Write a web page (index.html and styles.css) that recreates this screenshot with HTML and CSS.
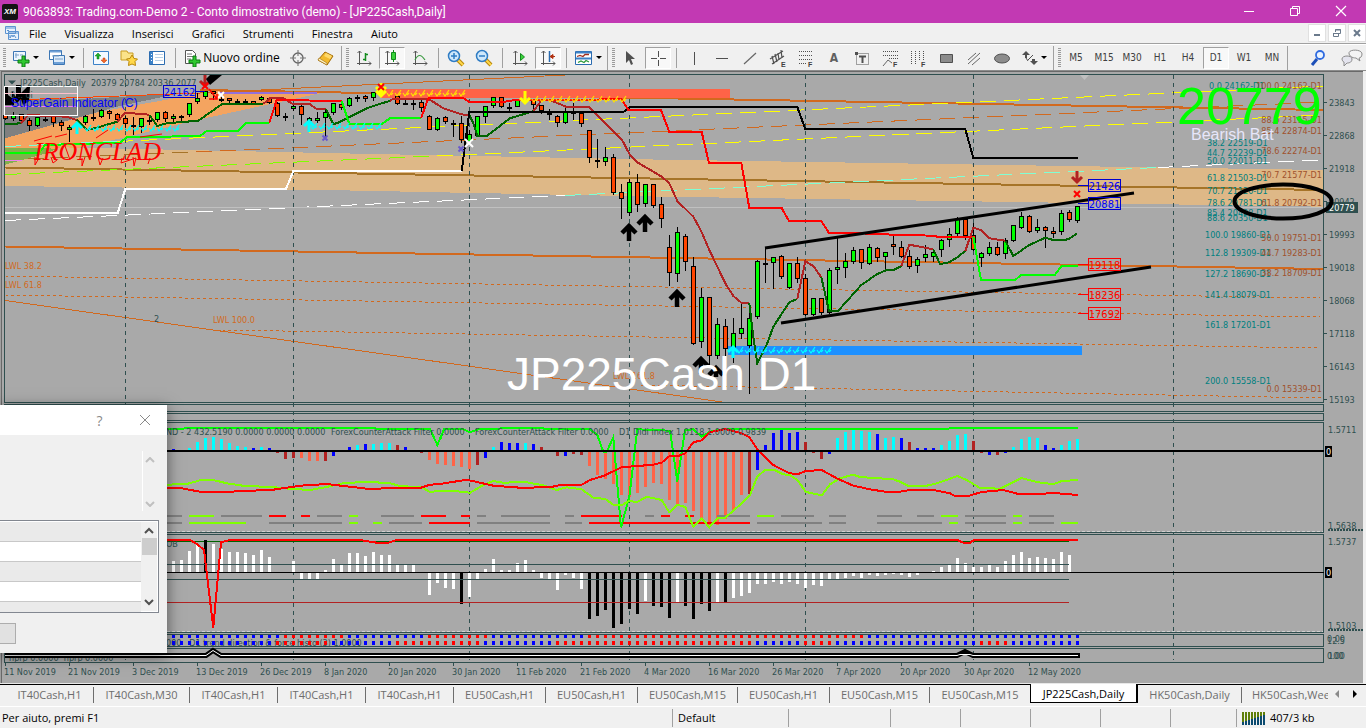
FILE: index.html
```
<!DOCTYPE html>
<html lang="it">
<head>
<meta charset="utf-8">
<title>9063893: Trading.com-Demo 2</title>
<link rel="stylesheet" href="styles.css">
</head>
<body>
<header class="titlebar">
  <span class="logo">XM</span>
  <h1 class="title">9063893: Trading.com-Demo 2 - Conto dimostrativo (demo) - [JP225Cash,Daily]</h1>
  <div class="winbtns">
    <button aria-label="Riduci a icona"><svg width="12" height="12"><path d="M1 6.500h10" stroke="#fff"/></svg></button>
    <button aria-label="Ripristina"><svg width="12" height="12"><path d="M1.500 3.500h7v7h-7zM3.500 3.500v-2h7v7h-2" fill="none" stroke="#fff"/></svg></button>
    <button aria-label="Chiudi"><svg width="12" height="12"><path d="M1 1l10 10M11 1L1 11" stroke="#fff" stroke-width="1.200"/></svg></button>
  </div>
</header>
<nav class="menubar">
  <svg class="docicon" width="16" height="16"><path d="M1.500 1.500h10v7h-10zM4.500 6.500h10v8h-10z" fill="#e8f2fc" stroke="#5b93d0"/><path d="M2 3h9M5 8h9M3 6l1-1 1 1M6 10v3l2-3 1 2 1-2 2 3" fill="none" stroke="#5b93d0"/></svg>
  <button>File</button><button>Visualizza</button><button>Inserisci</button><button>Grafici</button><button>Strumenti</button><button>Finestra</button><button>Aiuto</button>
  <div class="mdibtns">
    <button aria-label="Riduci"><svg width="10" height="10"><path d="M2 7h6" stroke="#6b7a8c" stroke-width="2"/></svg></button>
    <button aria-label="Ripristina finestra"><svg width="10" height="10"><path d="M1.500 5.500h5v3h-5zM3.500 4v-2.500h5v4h-2M3 2h6M1 5.500h6" fill="none" stroke="#6b7a8c"/></svg></button>
    <button aria-label="Chiudi finestra"><svg width="10" height="10"><path d="M2 2l6 6M8 2L2 8" stroke="#6b7a8c" stroke-width="2"/></svg></button>
  </div>
</nav>
<div class="toolbar" role="toolbar">
  <i class="grip"></i>
  <button class="tb drop" aria-label="Nuovo grafico"><svg width="18" height="18"><path d="M1.500 2.500h12v9h-12z" fill="#eef6ff" stroke="#3c76b4"/><path d="M4 4v5M3 6h4M8 6h3" stroke="#7aa0c8"/><path d="M10 7h3v4h4v3h-4v4h-3v-4H6v-3h4z" fill="#2fc82f" stroke="#0a7d12"/></svg><b class="caret"></b></button>
  <button class="tb drop" aria-label="Profili"><svg width="18" height="18"><path d="M1.500 1.500h12v9h-12z" fill="#fff" stroke="#3c76b4"/><path d="M5.500 6.500h11v9h-11z" fill="#dcebfa" stroke="#3c76b4"/><path d="M2 2.500h11M6 14h10" stroke="#6ea0d6" stroke-width="2"/><path d="M4 7h7M7 10h8" stroke="#7aa0c8"/></svg><b class="caret"></b></button>
  <i class="sep"></i>
  <button class="tb" aria-label="Market Watch"><svg width="16" height="16"><path d="M.5 1.500h15v13H.5z" fill="#f4f9ff" stroke="#3c82c8"/><path d="M5 3l3 3H6v3H4V6H2z" fill="#1fae2d" stroke="#0a7d12" stroke-width=".5"/><path d="M11 13l-3-3h2V8h2v2h2z" fill="#f36a2c" stroke="#c03c08" stroke-width=".5"/></svg></button>
  <button class="tb" aria-label="Navigatore"><svg width="18" height="18"><path d="M1 2h6l1 2h5v7H1z" fill="#fbe38a" stroke="#c99d22"/><path d="M12 6l2 3.500 3.500.5-2.500 2.500.5 4L12 15l-3.500 1.500.5-4L6.500 10l3.500-.5z" fill="#ffd84a" stroke="#b8860b"/></svg></button>
  <button class="tb" aria-label="Terminale"><svg width="16" height="16"><path d="M.5 1.500h15v13H.5z" fill="#fff" stroke="#2c6cb0"/><path d="M1 2h3v12H1z" fill="#3c82c8"/><path d="M6 4.500h8M6 7.500h8M6 10.500h8" stroke="#b8d0e8"/><path d="M2.500 4v9" stroke="#fff" stroke-dasharray="1 2"/></svg></button>
  <i class="sep"></i>
  <button class="tb order"><svg width="18" height="18"><path d="M2.500 1.500h7l3 3v10h-10z" fill="#fff" stroke="#555"/><path d="M4 5h5M4 7.500h6M4 10h4" stroke="#777"/><path d="M10 7h3v4h4v3h-4v4h-3v-4H6v-3h4z" fill="#2fc82f" stroke="#0a7d12"/></svg>Nuovo ordine</button>
  <button class="tb" aria-label="Strategy tester"><svg width="16" height="16"><circle cx="8" cy="8" r="5" fill="none" stroke="#666" stroke-width="1.300"/><path d="M8 0v6M8 10v6M0 8h6M10 8h6" stroke="#777" stroke-width="1.100"/></svg></button>
  <button class="tb" aria-label="MetaEditor"><svg width="18" height="18"><path d="M1 11l7-8 8 4-6 9z" fill="#f2b92e" stroke="#a06a08"/><path d="M1 11l9 5 0-2-8-5z" fill="#fff3c4" stroke="#a06a08" stroke-width=".6"/><path d="M9 4l6 3-2 3-6-3z" fill="#ffd96a"/></svg></button>
  <i class="sep full"></i><i class="grip"></i>
  <button class="tb" aria-label="Barre"><svg width="16" height="16"><path d="M3.500 1v14M1 13.500h14M1.500 3l2-2 2 2M13 11.500l2 2-2 2" fill="none" stroke="#555"/><path d="M9.500 3v8M9 4.500h3M7 9.500h3" stroke="#128a1c" stroke-width="1.500"/></svg></button>
  <button class="tb on" aria-label="Candele"><svg width="16" height="16"><path d="M3.500 1v14M1 13.500h14M1.500 3l2-2 2 2M13 11.500l2 2-2 2" fill="none" stroke="#555"/><path d="M9.500 0v12" stroke="#128a1c"/><path d="M7.500 2.500h4v7h-4z" fill="#3ad43a" stroke="#128a1c"/></svg></button>
  <button class="tb" aria-label="Linea"><svg width="16" height="16"><path d="M3.500 1v14M1 13.500h14M1.500 3l2-2 2 2M13 11.500l2 2-2 2" fill="none" stroke="#555"/><path d="M3 10c3-6 6-6 10 0" fill="none" stroke="#3a9a40" stroke-width="1.200"/></svg></button>
  <i class="sep"></i>
  <button class="tb" aria-label="Ingrandisci"><svg width="18" height="18"><path d="M10 10l6 6" stroke="#b8860b" stroke-width="4"/><path d="M11 11l5 5" stroke="#ffd84a" stroke-width="2"/><circle cx="7" cy="7" r="5.500" fill="#cfe8fb" stroke="#2f7cc4" stroke-width="1.500"/><path d="M4 7h6M7 4v6" stroke="#2f7cc4" stroke-width="1.500"/></svg></button>
  <button class="tb" aria-label="Riduci"><svg width="18" height="18"><path d="M10 10l6 6" stroke="#b8860b" stroke-width="4"/><path d="M11 11l5 5" stroke="#ffd84a" stroke-width="2"/><circle cx="7" cy="7" r="5.500" fill="#cfe8fb" stroke="#2f7cc4" stroke-width="1.500"/><path d="M4 7h6" stroke="#2f7cc4" stroke-width="1.500"/></svg></button>
  <i class="sep"></i>
  <button class="tb" aria-label="Scorrimento automatico"><svg width="16" height="16"><path d="M3.500 1v14M1 13.500h14M1.500 3l2-2 2 2M13 11.500l2 2-2 2" fill="none" stroke="#555"/><path d="M8.500 3.500l4 3.500-4 3.500z" fill="#3ad43a" stroke="#128a1c"/></svg></button>
  <button class="tb on" aria-label="Spostamento grafico"><svg width="16" height="16"><path d="M3.500 1v14M1 13.500h14M1.500 3l2-2 2 2M13 11.500l2 2-2 2" fill="none" stroke="#555"/><path d="M9.500 1v11" stroke="#2c6cb0" stroke-width="1.500"/><path d="M15 6.500h-4M13 4.500l-3 2 3 2z" fill="#b03010" stroke="#b03010"/></svg></button>
  <i class="sep"></i>
  <button class="tb drop" aria-label="Modelli"><svg width="18" height="18"><path d="M.5 2.500h16v13H.5z" fill="#fff" stroke="#2c6cb0"/><path d="M1 3.500h15M1 9.500h15" stroke="#3c82c8" stroke-width="2"/><path d="M2 7.500l3-1 3 1 2-2h4" fill="none" stroke="#a03020" stroke-width="1.300"/><path d="M3 13.500l3-1.500 3 1.500 2-2 3 1.500" fill="none" stroke="#2c9a3a" stroke-width="1.300"/></svg><b class="caret"></b></button>
  <i class="sep full"></i><i class="grip"></i>
  <button class="tb" aria-label="Cursore"><svg width="16" height="16"><path d="M4 1v12l3-3 2 5 2-1-2-5h4z" fill="#505050"/></svg></button>
  <button class="tb on" aria-label="Mirino"><svg width="16" height="16"><path d="M8.500 1v6M8.500 10v6M1 8.500h6M10 8.500h6" stroke="#505050"/></svg></button>
  <i class="sep"></i>
  <button class="tb" aria-label="Linea verticale"><svg width="16" height="16"><path d="M8.500 2v13" stroke="#505050"/></svg></button>
  <button class="tb" aria-label="Linea orizzontale"><svg width="16" height="16"><path d="M2 8.500h12" stroke="#505050"/></svg></button>
  <button class="tb" aria-label="Trendline"><svg width="16" height="16"><path d="M2 14L14 3" stroke="#666" stroke-width="1.200"/></svg></button>
  <button class="tb" aria-label="Canale"><svg width="18" height="18"><path d="M1 10L14 2M3 15L15 7M3 7l2 8M6 5l2 8M9 4l1 7M12 1l1 8" stroke="#505050" stroke-width="1.200"/><text class="tiny" x="12" y="18">E</text></svg></button>
  <button class="tb" aria-label="Fibonacci"><svg width="18" height="18"><path d="M2 2.500h13M2 6.500h13M2 10.500h13M2 14.500h8" stroke="#505050" stroke-dasharray="1 1"/><text class="tiny" x="11" y="18">F</text></svg></button>
  <button class="tb tf strong">A</button>
  <button class="tb" aria-label="Etichetta"><svg width="16" height="16"><path d="M2.500 3.500h12v11h-12z" fill="none" stroke="#505050" stroke-dasharray="1 1"/><path d="M5 6.500h7M8.500 6v7" stroke="#505050" stroke-width="2"/><path d="M1 2h3v3H1z" fill="#505050"/></svg></button>
  <button class="tb" aria-label="Espansione"><svg width="18" height="18"><path d="M2 2.500h15M2 6.500h15M8 9.500h9" stroke="#505050" stroke-dasharray="1 1"/><path d="M2 17l5-6 4 3" fill="none" stroke="#666"/><text class="tiny" x="12" y="18">F</text></svg></button>
  <button class="tb" aria-label="Fusi orari"><svg width="18" height="18"><path d="M2.500 2v13M6.500 2v13M10.500 2v9M14.500 2v9" stroke="#505050" stroke-dasharray="1 1"/><text class="tiny" x="12" y="18">F</text></svg></button>
  <button class="tb" aria-label="Rettangolo"><svg width="16" height="16"><path d="M2.500 4.500h12v8h-12z" fill="#8c8c8c" stroke="#505050"/></svg></button>
  <button class="tb" aria-label="Linee parallele"><svg width="16" height="16"><path d="M2 10l8-7M2 14L14 3M6 15l8-7" stroke="#666"/></svg></button>
  <button class="tb" aria-label="Ellisse"><svg width="18" height="16"><ellipse cx="9" cy="8.500" rx="7.500" ry="4.500" fill="#8c8c8c" stroke="#505050"/></svg></button>
  <button class="tb drop" aria-label="Frecce"><svg width="16" height="16"><path d="M4 1l4 4H5v3H3V5H0zM12 15l4-4h-3V9h-3v2H8z" fill="#505050"/><path d="M6 10l5-5M4 8l2 3" stroke="#505050"/></svg><b class="caret"></b></button>
  <i class="sep full"></i><i class="grip"></i>
  <button class="tb tf">M5</button><button class="tb tf">M15</button><button class="tb tf">M30</button><button class="tb tf">H1</button><button class="tb tf">H4</button><button class="tb tf on">D1</button><button class="tb tf">W1</button><button class="tb tf">MN</button>
  <i class="sep full"></i>
  <div class="right">
    <button class="tb" aria-label="Cerca"><svg width="18" height="18"><path d="M8 10l-5 6" stroke="#1d4fb8" stroke-width="3"/><circle cx="11" cy="6" r="4" fill="#eaf3ff" stroke="#2f6be0" stroke-width="1.800"/></svg></button>
    <button class="tb" aria-label="Chat"><svg width="22" height="18"><path d="M8 4c0-4 13-4 13 1 0 3-2 4-3 4l1 3-4-3c-4 0-7-2-7-5z" fill="#f4f4f4" stroke="#8c8c8c"/><path d="M1 10c0-4 10-4 10 0s-4 4-5 4l-3 3v-4c-1 0-2-2-2-3z" fill="#e4e4ee" stroke="#8c8c8c"/></svg></button>
  </div>
</div>
<main class="workspace">
  <svg id="chart" class="chart" viewBox="0 71 1366 613" preserveAspectRatio="xMinYMin meet" role="img" aria-label="JP225Cash D1"></svg>
  <section class="dialog" aria-label="Finestra di dialogo">
    <div class="dlg-title"><button aria-label="Guida">?</button><button aria-label="Chiudi"><svg width="12" height="12"><path d="M1 1l10 10M11 1L1 11" stroke="#8a8a8a"/></svg></button></div>
    <div class="dlg-body">
      <div class="memo">
        <svg width="10" height="6"><path d="M1 5l4-4 4 4" fill="none" stroke="#c0c0c0" stroke-width="2"/></svg>
        <svg width="10" height="6"><path d="M1 1l4 4 4-4" fill="none" stroke="#c0c0c0" stroke-width="2"/></svg>
      </div>
      <div class="list">
        <div class="rows"><i></i><i></i><i></i><i></i><i></i></div>
        <div class="scroll">
          <svg width="10" height="16"><path d="M1 11l4-4 4 4" fill="none" stroke="#505050" stroke-width="2"/></svg>
          <b class="thumb"></b>
          <svg class="down" width="10" height="16"><path d="M1 5l4 4 4-4" fill="none" stroke="#505050" stroke-width="2"/></svg>
        </div>
      </div>
      <button class="dlg-btn" aria-label="OK"></button>
    </div>
  </section>
</main>
<nav class="tabs">
  <a href="#" class="w88">IT40Cash,H1</a><a href="#" class="w96">IT40Cash,M30</a><a href="#" class="w88">IT40Cash,H1</a><a href="#" class="w88">IT40Cash,H1</a><a href="#" class="w88">IT40Cash,H1</a><a href="#" class="w92">EU50Cash,H1</a><a href="#" class="w92">EU50Cash,H1</a><a href="#" class="w100">EU50Cash,M15</a><a href="#" class="w92">EU50Cash,H1</a><a href="#" class="w100">EU50Cash,M15</a><a href="#" class="w100 last">EU50Cash,M15</a><a href="#" class="w108 active">JP225Cash,Daily</a><a href="#" class="w104">HK50Cash,Daily</a><a href="#" class="fill">HK50Cash,Weekly</a>
  <div class="tabnav"><button aria-label="Precedente"><svg width="6" height="8"><path d="M5 0v8L1 4z" fill="#8a8a8a"/></svg></button><button aria-label="Successivo"><svg width="6" height="8"><path d="M1 0v8l4-4z" fill="#000"/></svg></button></div>
</nav>
<footer class="status">
  <span class="help">Per aiuto, premi F1</span><span class="c116">Default</span><span class="c102"></span><span class="c70"></span><span class="c70"></span><span class="c70"></span><span class="c70"></span><span class="c66"></span>
  <span class="conn"><svg width="24" height="14" id="signal"></svg>407/3 kb</span>
</footer>
<script src="chart.js"></script>
</body>
</html>
```
FILE: styles.css
```
* { box-sizing: border-box; }
body { margin: 0; height: 100vh; display: flex; flex-direction: column; overflow: hidden; background: #f0f0f0; color: #000; font: 12px "Open Sans", "Noto Sans", sans-serif; }
button { margin: 0; padding: 0; border: 0; background: none; font: inherit; color: inherit; }
svg { display: block; flex: none; }

.titlebar { flex: none; height: 23px; display: flex; align-items: center; background: #c239b3; color: #fff; }
.logo { width: 16px; height: 16px; margin-left: 2px; border-radius: 2px; background: #141414; font: italic bold 8px/16px "Liberation Sans", sans-serif; text-align: center; }
.title { margin: 0 0 0 5px; font: 400 12px Roboto, "Open Sans", sans-serif; white-space: nowrap; }
.winbtns { margin: 0 2px 2px auto; display: flex; }
.winbtns button { width: 46px; height: 20px; display: grid; place-items: center; }

.menubar { flex: none; height: 21px; display: flex; align-items: center; border-bottom: 1px solid #a0a0a0; }
.docicon { margin: 0 0 0 4px; }
.menubar > button { padding: 0 9px; line-height: 19px; font-size: 11px; }
.mdibtns { margin-left: auto; display: flex; gap: 2px; }
.mdibtns button { width: 18px; height: 18px; display: grid; place-items: center; background: #fff; border: 1px solid #e0e0e0; }

.toolbar { flex: none; height: 27px; display: flex; align-items: center; padding-left: 1px; border-top: 1px solid #fff; border-bottom: 1px solid #8c8c8c; overflow: hidden; }
.grip { flex: none; width: 6px; height: 20px; background: repeating-linear-gradient(#9a9a9a 0 1px, #f0f0f0 1px 2px) 2px 0 / 3px 20px no-repeat; }
.sep { flex: none; width: 8px; height: 20px; background: linear-gradient(#a0a0a0, #a0a0a0) 4px 0 / 1px 20px no-repeat; }
.sep.full { width: 4px; height: 24px; background: linear-gradient(#a0a0a0, #a0a0a0) 1px 0 / 1px 24px no-repeat; }
.tb { flex: none; width: 28px; height: 22px; display: flex; align-items: center; justify-content: center; }
.tb.on { width: 26px; margin: 0 1px; background: #f8f8f8; border: 1px solid #a0a0a0; border-right-color: #fff; border-bottom-color: #fff; }
.tb.drop { width: 36px; gap: 3px; }
.tb.order { width: 105px; gap: 2px; font-size: 12px; white-space: nowrap; }
.tb.tf { font: 10px "DejaVu Sans Condensed", "Noto Sans", sans-serif; color: #404040; }
.tb.strong { font-weight: bold; font-size: 12px; color: #606060; }
.tiny { font: bold 7px "Liberation Sans", sans-serif; fill: #404040; }
.caret { border: 3px solid transparent; border-top-color: #000; border-bottom: 0; }
.right { margin-left: auto; display: flex; gap: 6px; }

.workspace { flex: 1; min-height: 0; position: relative; background: #a9a9a9; border-right: 3px solid #f0f0f0; }
.chart { width: calc(100% + 3px); height: 100%; }
.chart text { font: 9px "DejaVu Sans Condensed", "Noto Sans", sans-serif; fill: #2f4f4f; white-space: pre; }
.chart .crisp { shape-rendering: crispEdges; }
.chart .teal { fill: #008080; }
.chart .sienna { fill: #a0522d; text-anchor: end; }
.chart .lwl { fill: #d2691e; }
.chart .inv { fill: #fff; }
.chart .tag { font-size: 11px; text-anchor: middle; }
.chart .blue { fill: #0000ff; }
.chart .red { fill: #ff0000; }
.chart .gain { font: 12px "Liberation Sans", sans-serif; fill: #0000ff; }
.chart .script { font: italic 26px "Liberation Serif", serif; fill: #ff0000; }
.chart .watermark { font: 46px "Liberation Sans", sans-serif; fill: #fff; }
.chart .price { font: 52px "Liberation Sans", sans-serif; fill: #00ff00; }
.chart .pattern { font: 16px "Liberation Sans", sans-serif; fill: #e6e6fa; }

.dialog { position: absolute; left: 0; bottom: 31px; width: 167px; height: 248px; background: #f0f0f0; box-shadow: 0 3px 14px rgba(0, 0, 0, .5); }
.dlg-title { height: 30px; display: flex; justify-content: flex-end; background: #fff; color: #8a8a8a; }
.dlg-title button { width: 45px; display: grid; place-items: center; font-size: 14px; }
.dlg-body { padding: 16px 8px 0 0; }
.memo { height: 60px; width: 158px; display: flex; flex-direction: column; justify-content: space-between; align-items: flex-end; padding: 6px 3px 4px 0; background: linear-gradient(#fff, #fff) 142px 0 / 1px 60px no-repeat; }
.list { height: 93px; margin-top: 9px; display: flex; border: 1px solid #828790; border-left: 0; padding: 1px 1px 1px 0; background: #fff; overflow: hidden; }
.rows { flex: 1; }
.rows i { display: block; height: 20px; background: #eaeaea; border-bottom: 1px solid #c8c8c8; }
.rows i:nth-child(even) { background: #fff; }
.scroll { width: 16px; display: flex; flex-direction: column; align-items: center; background: #f0f0f0; }
.thumb { width: 15px; height: 17px; background: #cdcdcd; }
.down { margin-top: auto; }
.dlg-btn { display: block; width: 16px; height: 21px; margin-top: 10px; background: #e1e1e1; border: 1px solid #adadad; border-left: 0; }

.tabs { flex: none; height: 22px; display: flex; padding-left: 6px; border-top: 1px solid #000; background: #f0f0f0; }
.tabs a { flex: none; height: 16px; margin-top: 2px; line-height: 15px; text-align: center; color: #6d6d6d; text-decoration: none; font-size: 11px; white-space: nowrap; border-right: 1px solid #6d6d6d; }
.tabs .last { border-right: 0; }
.tabs .active { height: 19px; margin-top: -1px; line-height: 20px; color: #000; background: #fff; border: 1px solid #000; border-top: 0; border-right-width: 2px; }
.w88 { width: 88px; } .w92 { width: 92px; } .w96 { width: 96px; } .w100 { width: 100px; } .w104 { width: 104px; } .w108 { width: 108px; }
.tabs .fill { flex: 1 1 0; min-width: 0; overflow: hidden; text-align: left; padding-left: 10px; border: 0; }
.tabnav { flex: none; width: 38px; display: flex; gap: 12px; padding: 5px 6px 0; align-items: flex-start; }

.status { flex: none; height: 22px; display: flex; align-items: center; border-top: 1px solid #fff; font-size: 11px; }
.status span { flex: none; height: 18px; line-height: 18px; padding-left: 5px; border-left: 1px solid #a0a0a0; white-space: nowrap; }
.status .help { flex: 1; padding-left: 2px; border: 0; }
.c116 { width: 116px; } .c102 { width: 102px; } .c70 { width: 70px; } .c66 { width: 66px; }
.status .conn { width: 130px; display: flex; align-items: center; gap: 4px; }
```
FILE: chart.js
```
const svg = document.getElementById('chart');
const NS = 'http://www.w3.org/2000/svg';
const SLATE = '#2f4f4f', OR = '#d2691e', DR = '#b22222', DG = '#006400', LIME = '#00ff00';

function el(name, attrs, text, parent) {
  const e = document.createElementNS(NS, name);
  for (const a in attrs) e.setAttribute(a, attrs[a]);
  if (text !== undefined) e.textContent = text;
  (parent || svg).appendChild(e);
  return e;
}
const rect = (x, y, w, h, fill, stroke) => el('rect', { x, y, width: w, height: h, fill: fill || 'none', stroke: stroke || 'none', class: 'crisp' });
const line = (x1, y1, x2, y2, stroke, w = 1, dash = '') => el('line', { x1, y1, x2, y2, stroke, 'stroke-width': w, 'stroke-dasharray': dash, class: 'crisp' });
const path = (d, stroke, w, fill = 'none') => el('path', { d, stroke, 'stroke-width': w, fill });
const text = (x, y, s, cls = '') => el('text', { x, y, class: cls }, s);
// Data points are stored in thirds of a pixel from a panel origin.
function poly(ox, oy, pts, stroke, w, fill = 'none') {
  const p = pts.split(' ').map(s => { const [a, b] = s.split(','); return (ox + a / 3).toFixed(1) + ',' + (oy + b / 3).toFixed(1); }).join(' ');
  el(fill === 'none' ? 'polyline' : 'polygon', { points: p, stroke, 'stroke-width': w, fill, class: 'crisp' });
}
const bx = k => 5 + 8 * k;

// Window edge
line(0, 71.5, 1363, 71.5, '#696969'); line(1.5, 71, 1.5, 684, '#696969'); line(0.5, 71, 0.5, 684, '#a0a0a0');
line(0, 683.5, 1363, 683.5, '#e8e8e8');

// Zones
poly(0, 70, '15,85 235,88 540,70 350,110 15,205', 'none', 0, '#808080');
poly(0, 70, '15,205 300,125 640,64 960,70 600,148 370,203 15,284', 'none', 0, '#f4a460');
poly(0, 70, '15,235 140,235 210,238 15,284', 'none', 0, '#82b04e');
poly(0, 70, '140,250 180,232 1020,250 1920,268 3969,300 3969,410 1920,379 1020,361 15,348 15,284', 'none', 0, '#deb887');

// Slanted levels
line(5, 167.5, 1323, 190, '#a67428', 2);
line(5, 246.5, 1323, 269, OR, 2);
line(200, 90, 1323, 110, OR, 2);
line(13, 100, 200, 93, '#ff4500'); line(200, 93, 565, 75, OR);
line(218, 92.5, 317, 92.5, '#9370db', 2);
line(5, 160.5, 22, 160.5, '#ee82ee');
line(5, 276, 1320, 298, OR, 1, '3 3');
line(5, 295, 1320, 317, OR, 1, '3 3');
line(222, 330, 1320, 348, OR, 1, '3 3');
line(640, 385, 1323, 398, OR, 1, '3 3');
line(5, 300.5, 722, 402, OR);
line(5, 220.5, 565, 195.5, '#fff', 1, '16 8');
line(565, 195.5, 1158, 167.5, '#7fffd4', 1, '16 8');
line(1158, 167.5, 1320, 160, '#fff', 1, '16 8');
line(5, 146.5, 125, 141, '#7fffd4', 1, '16 8');
line(117, 141.5, 1323, 86, '#ffff00', 1, '16 8');
line(5, 174.5, 437, 156, '#7fff00', 1, '16 8');
line(437, 156, 1323, 115, '#ffff00', 1, '16 8');
line(28, 159, 196, 152, '#a67428', 1, '16 8');
line(196, 152, 1323, 102, OR, 1, '16 8');
line(4, 207.5, 1323, 207.5, '#c0c0c0');

// Period separators
[125, 293, 469, 629, 805, 973, 1173].forEach(x => line(x + .5, 75, x + .5, 660, SLATE, 1, '4 4'));

// Panels
[[74, 402], [404, 411], [413, 420], [422, 532], [534, 632], [634, 646], [648, 662]].forEach(([a, b]) => rect(4.5, a + .5, 1319, b - a, '', SLATE));
line(167, 531.5, 1323, 531.5, '#d0d0d0', 1, '3 2'); line(167, 631.5, 1323, 631.5, '#d0d0d0', 1, '3 2');

// Order blocks
rect(381, 89, 349, 9, '#ff6347'); rect(728, 346, 354, 9, '#1e90ff');

// Candles: index, kind, high, top, bottom, low
const candles = `0o134,138,146,150 1g125,138,146,152 2o132,135,152,160 3o145,152,167,182 4g142,145,167,170 5d138,146,148,156 6o135,142,158,172 7o150,160,168,182 8g165,175,180,215 10g135,140,160,165 11d118,140,142,152 12g116,122,140,145 13o120,125,133,147 14o130,134,150,155 15o138,146,162,180 16d142,165,167,195 17g145,148,170,190 18d135,150,152,165 19g125,130,150,155 20o122,128,148,155 21g133,140,146,160 22d135,137,139,152 23g98,103,136,140 24g68,86,96,102 25g65,67,82,88 26o62,66,72,90 27d78,86,88,97 28o84,88,94,100 29d88,94,96,102 30d86,93,95,102 31o92,95,98,103 32g78,83,91,94 33o84,87,100,103 34o96,101,138,140 35d130,138,140,152 36g106,110,118,124 37o105,110,136,165 38g142,148,154,165 39g125,146,151,160 40g120,128,145,200 41g98,103,130,135 42o100,105,115,120 43g82,86,108,110 44d75,80,82,95 45o76,80,86,95 46g68,70,84,92 49o78,80,103,105 50d86,98,100,105 51d88,99,101,120 52o87,100,114,125 53o136,142,179,180 54g142,146,179,182 55o138,145,157,163 56d150,158,160,200 57o138,163,211,220 58g180,196,215,216 59g140,142,198,202 60g108,110,142,160 61g82,84,107,115 62o82,84,111,113 63d98,110,112,122 64g92,94,111,112 66o90,94,106,125 67o105,108,124,133 68d118,128,130,150 69o135,142,160,172 70g112,126,160,161 71d100,126,128,150 72o122,133,163,172 73o182,184,265,278 74d208,269,271,295 75g232,265,275,287 76o253,265,370,375 77o342,370,388,446 78g327,340,430,437 79o312,338,406,425 80g344,346,403,412 81o342,346,409,415 82o382,406,448,473 83o495,535,610,647 84g472,490,613,637 85o492,500,577,604 86o562,592,823,825 87g655,685,815,835 88o682,683,859,885 89g745,766,859,867 90o748,772,838,870 91g745,793,840,878 92g697,778,793,806 93g700,748,828,973 94g570,577,742,748 95d535,578,580,640 96g563,565,580,658 97o556,562,622,628 98g580,583,655,658 99o562,583,628,640 100o612,628,736,738 101g683,688,736,738 102o683,688,730,736 103g595,604,730,731 104g500,595,601,643 105g550,577,595,625 106g530,544,577,583 107o536,541,580,598 108g523,535,583,586 109o530,538,565,577 110g548,550,562,596 111o497,526,532,556 112o513,535,562,565 113o540,562,592,598 114g560,571,589,610 115g526,556,565,575 116g538,549,562,577 117g508,514,541,560 118g475,496,511,530 119g440,449,493,498 120o447,449,499,510 121o460,499,541,543 122g546,553,565,590 123g517,535,553,558 124o515,535,556,557 125g505,514,553,566 126g467,469,514,515 127g425,442,475,476 128o435,442,487,488 129g447,475,484,488 130o468,475,484,533 131o472,485,490,505 132g420,433,487,494 133o420,430,451,455 134g410,412,454,458`;
candles.split(' ').forEach(s => {
  const [, k, t, r] = s.match(/^(\d+)([ogd])(.*)$/);
  const [h, a, b, l] = r.split(',').map(v => Math.round(70 + v / 3));
  const x = bx(+k);
  line(x + .5, h, x + .5, l, '#000');
  if (t === 'd') rect(x - 2, a, 5, 1.5, '#000');
  else rect(x - 1.5, a - .5, 4, Math.max(b - a, 2), t === 'o' ? '#ff4500' : LIME, '#000');
});

// Moving average
[[0, DG, '15,163 62,160'], [0, DR, '62,160 85,135 200,140 230,150'], [0, DG, '230,150 260,180 300,170 352,155'], [0, DR, '352,155 376,128 448,134'],
 [0, DG, '448,134 472,168 500,160 595,152 665,103 790,102'], [0, DR, '790,102 810,85 850,85 880,103 930,103 950,117 978,117'], [0, DG, '978,117 1000,163 1020,156'],
 [340, DG, '0,155 80,115 125,100 150,93'], [340, DR, '150,93 160,86 265,86 310,115 365,133 388,136'], [340, DG, '388,136 400,160 412,197 440,198 510,145 560,130 580,124'],
 [340, DR, '580,124 605,90 630,90 680,111 748,111 845,208 870,255 892,277 940,305 965,320 988,340 1012,393 1060,440 1084,484 1108,540 1156,640 1180,678 1204,698 1228,699'],
 [640, DG, '328,699 340,800 352,880 378,830 400,770 448,697 472,687'], [640, DR, '472,687 496,574 520,588 544,622'], [640, DG, '544,622 567,723 595,722 664,645 712,612 740,600 760,600 784,588'],
 [640, DR, '784,588 808,524 880,538'], [640, DG, '880,538 900,582 928,577 952,562 976,543'], [640, DR, '976,543 1000,473 1022,480 1048,505 1096,512'],
 [960, DG, '136,512 160,558 208,525 256,503 280,510 315,510 330,505 352,490']].forEach(([o, c, p]) => poly(o, 70, p, c, 2));

// Stops and step lines
poly(0, 70, '15,429 353,429 376,357 858,357 880,303 1385,303', '#fff', 2);
poly(340, 70, '365,303 388,126 850,126 870,111 1372,111 1396,177 1876,177 1900,264 2213,264', '#000', 2);
poly(0, 70, '15,248 118,248 135,225 360,218 380,202 600,198 620,183 715,183 740,158 808,158', LIME, 2);
poly(0, 70, '808,158 830,90 1025,93', '#f00', 2);
poly(340, 70, '5,93 28,162 125,162 150,145 243,145', LIME, 2);
poly(340, 70, '243,145 265,85 370,84 388,96 490,96 520,91 845,88 865,120 963,120 988,186 1085,186 1107,279 1204,279 1228,414 1325,414 1347,453 1444,453 1467,489 1540,489 1660,494 1780,497 1795,501 1900,501', '#f00', 2);
poly(960, 70, '40,500 63,630 165,630 185,614 285,614 305,588 353,588', LIME, 2);
path('M765 248L1134 193M781 323L1151 267', '#000', 3);
path('M1080 75l4.500 5 4.500-5z', 'none', 0, '#c0c0c0');

// Signal trails
const trail = (x0, x1, y, c) => { let d = ''; for (let x = x0; x < x1; x += 8) d += `M${x} ${y}l2 3 4-6M${x + 4} ${y + 2}l2-2`; path(d, c, 1.2); };
trail(387, 463, 93, '#ffe000'); trail(532, 623, 99, '#ffe000');
trail(85, 175, 128, '#00ffff'); trail(311, 376, 126, '#00ffff'); trail(737, 830, 350, '#00ffff');

const up = (x, y, h, c) => path(`M${x} ${y + h}V${y + 3}M${x - 7} ${y + 10}L${x} ${y + 3}L${x + 7} ${y + 10}`, c, 4.5);
const down = (x, y, h, c) => path(`M${x} ${y}V${y + h - 2}M${x - 5} ${y + h - 7}L${x} ${y + h - 2}L${x + 5} ${y + h - 7}`, c, 3);
const cross = (x, y, c, r = 3) => path(`M${x - r} ${y - r}L${x + r} ${y + r}M${x + r} ${y - r}L${x - r} ${y + r}`, c, 2);
up(629, 223, 18, '#000'); up(645, 214, 18, '#000'); up(677, 289, 18, '#000'); up(701, 356, 18, '#000'); up(716, 365, 12, '#000');
const smallUp = (x, y) => path(`M${x} ${y + 13}V${y + 2}M${x - 5} ${y + 7}L${x} ${y + 2}L${x + 5} ${y + 7}`, '#00ffff', 3);
smallUp(77, 121); smallUp(309, 119); smallUp(733, 345);
down(381, 86, 12, '#ffff00'); down(381, 83, 11, '#ffff00'); down(525, 91, 14, '#ffff00'); down(1077, 171, 13, DR);
cross(1077, 194, '#f00'); cross(221, 95, '#fff'); cross(325, 138, '#6a5acd', 2.5); cross(461, 149, '#6a5acd', 2.5); cross(469, 143, '#fff', 4); cross(381, 87, '#f00');
down(205, 75, 13, DR); cross(205, 86, '#f00'); path('M209 89L217 99M217 94v5h-8', '#f00', 1.500);
path('M210 75h12l-12 10-4-6z', 'none', 0, '#000');

// Corner panel
path('M5 87h3v8l4 3V91l4 6V85h5v8l6-6h3l-1 14-6 4-2-6-4 4-3-4v6H5z', 'none', 0, '#000');
text(10, 98, '0 .. oi');
rect(4.5, 86.5, 73, 29, '', '#fff'); line(5, 93.5, 77, 93.5, '#ffc0cb'); line(5, 106.5, 77, 106.5, '#ee82ee');
path('M8 80.500h8l-4 4z', 'none', 0, SLATE);
text(20, 86, 'JP225Cash,Daily  20379 20784 20336 2077');
text(11, 107, 'SuperGain Indicator (C)', 'gain');
text(34, 160, 'IRONCLAD', 'script');
path('M35 157l0 8 4-7M51 157l2 6 4-3M64 143l6 17M82 158l0 8 3-9M98 157l2 8 3-7M122 158l-1 5 15-5M133 157l1 9 2-8M150 158l-2 6', '#f00', 1);
path('M34 141l18-5M55 137l12-3M96 138l12-8M140 137l22-3', '#f00', 1);
text(5, 269, 'LWL 38.2', 'lwl'); text(5, 288, 'LWL 61.8', 'lwl'); text(213, 323, 'LWL 100.0', 'lwl'); text(613, 379, 'LWL 161.8', 'lwl'); text(154, 322, '2');

// Price tags
const tag = (x, y, s, c, cls) => { rect(x + .5, y - 5.5, 32, 12, '', c); text(x + 16.5, y + 5, s, 'tag ' + cls); };
tag(163, 91, '24162', '#0000cd', 'blue'); line(196, 91.5, 205, 91.5, '#0000cd');
[[185, '21426', 1], [203, '20881', 1], [264, '19118'], [294, '18236'], [313, '17692']].forEach(([y, s, b]) => {
  const c = b ? '#0000cd' : '#ff0000';
  line(1078, y + .5, 1088, y + .5, c); tag(1088, y, s, c, b ? 'blue' : 'red');
});

text(507, 390, 'JP225Cash D1', 'watermark');

[[85, '0.0 24162', 1209], [142, '38.2 22519'], [152, '44.7 22239'], [160, '50.0 22011'], [177, '61.8 21503'], [190, '70.7 21120'], [202, '78.6 20781'], [212, '85.4 20498'], [217, '88.6 20350'], [234, '100.0 19860', 1205], [252, '112.8 19309', 1205], [273, '127.2 18690', 1205], [294, '141.4 18079', 1205], [324, '161.8 17201', 1205], [380, '200.0 15558', 1205]]
  .forEach(([y, s, x]) => text(x || 1207, y + 4, s + '-D1', 'teal'));
[[85, '100.0 24162'], [119, '88.6 23115'], [130, '85.4 22874'], [150, '78.6 22274'], [174, '70.7 21577'], [202, '61.8 20792'], [237, '50.0 19751'], [252, '44.7 19283'], [272, '38.2 18709'], [388, '0.0 15339']]
  .forEach(([y, s]) => text(1322, y + 4, s + '-D1', 'sienna'));
text(1177, 124, '20779', 'price');
text(1191, 140, 'Bearish Bat', 'pattern');

// Price scale
['23843', '22868', '21918', '20942', '19993', '19018', '18068', '17118', '16143', '15193'].forEach((s, i) => {
  line(1324, 102.5 + 33 * i, 1327, 102.5 + 33 * i, SLATE); text(1329, 106 + 33 * i, s);
});
rect(1326, 202, 32, 11, SLATE); text(1329, 211, '20779', 'inv');
el('ellipse', { cx: 1283, cy: 201.5, rx: 48.5, ry: 17, fill: 'none', stroke: '#000', 'stroke-width': 4 });

// Oscillator 1
const C = { b: '#0000ff', c: '#00ffff', r: DR, t: '#ff6347', w: '#fff', k: '#000' };
function hist(start, data, zero) {
  let k = start;
  data.split(' ').forEach(s => {
    if (s !== '-') {
      const v = Math.round(400 + parseInt(s, 10) / 3);
      rect(bx(k) - 1, Math.min(v, zero), 3, Math.abs(v - zero), C[s.slice(-1)]);
    }
    k++;
  });
}
hist(21, '147b - 143c 125c 114c 111c 117c 129c 137c 141c 144b 141c 144b 159r 177r 174r 174t 183t 183t 183r 168b - 141b 135c 132b 131c 129c 129c 135r 141b - 159r 180t 192t 195t 198t 201t 207t 195r 174b 141c 126b 129b 129b 129c 132b 141r - 168r 168b 162r 165r 198t 225t 237t 252t 285t 291t 279t 261t 249t 252t 300t 312t 309t 333t 355t 375t 375t 357t 330t 285t 282r 210b 135b 99b 87b 99b 96b 126r 159r 177r 162b 114c 96c 84c 93c 95c 102b 113c 110c 114b 126r 144b 144b 144b 135c 123c 105c 101c 123r 158r 165b 165r 159b 141c 117c 111c 114c 135b 144b 135c 123c 117c', 451);
const rowOf = (y, s) => s.split(' ').forEach(p => {
  const [a, b] = p.slice(1).split('-');
  line(+a, y, +b, y, { g: '#808080', l: '#7fff00', r: '#ff0000' }[p[0]], 2);
});
rowOf(516, 'g167-182 l189-214 g221-262 r269-286 r301-310 g317-342 l349-358 g381-414 r421-446 r461-470 g477-486 g501-550 g565-574 r581-622 g645-654 r661-670 r685-694 g717-750 l757-774 g781-814 g829-846 g877-902 g917-934 l941-958 g965-1006 l1013-1022 g1029-1054');
rowOf(523, 'g167-182 l189-246 g269-342 l349-358 l373-382 g389-422 r429-470 g477-550 g565-582 r589-750 g757-822 g829-846 g877-942 l949-958 g965-1006 l1013-1022 g1029-1054 l1061-1078');
poly(0, 400, '500,86 690,84 1290,86 1312,135 1332,88', LIME, 2);
poly(440, 400, '0,120 12,88 70,88 90,97 115,88 220,84 450,88 472,105 490,155 500,155 520,112 543,382 568,290 592,88 690,92 712,245 735,90 760,88 785,110 810,95 850,88 1380,86 1913,84', LIME, 2);
poly(0, 400, '500,254 560,252 600,241 640,240 680,250 740,259 810,260 850,265 930,270 975,262 1030,250 1100,245 1170,250 1200,258 1265,262 1290,276 1320,272', '#7fff00', 2);
poly(440, 400, '0,272 50,274 90,278 130,255 160,243 190,248 255,246 310,256 350,270 380,262 425,268 460,293 496,297 520,314 545,316 568,302 590,307 620,290 665,300 688,337 712,314 736,321 760,380 785,355 808,382 832,355 856,353 905,310 930,285 952,230 975,210 1003,210 1030,223 1050,225 1072,240 1098,276 1145,286 1170,253 1200,235 1240,224 1260,231 1360,238 1380,245', '#7fff00', 2);
poly(900, 400, '0,245 25,258 75,258 100,253 145,238 172,228 200,240 240,264 300,266 364,234 410,246 460,253 485,243 533,240', '#7fff00', 2);
poly(0, 400, '500,264 545,265 605,276 690,275 820,269 900,257 980,252 1100,266 1260,264 1290,254 1320,252', '#f00', 2);
poly(440, 400, '0,252 80,239 160,257 240,263 330,262 360,255 425,254 450,240 490,228 545,202 640,194 665,188 688,169 712,169 736,160 760,127 785,121 808,97 856,87 905,100 928,112 955,152 1000,195 1048,220 1075,222 1098,213 1145,210 1190,235 1240,257 1290,268 1340,276 1380,275', '#f00', 2);
poly(900, 400, '0,275 30,270 100,270 150,280 165,288 205,288 245,276 310,270 355,282 430,282 450,278 533,285', '#f00', 2);
line(4, 451, 1324, 451, '#000', 2);
text(166, 435, 'ND - 2 432.5190 0.0000 0.0000 0.0000'); text(331, 435, 'ForexCounterAttack Filter 0.0000'); text(475, 435, 'ForexCounterAttack Filter 0.0000'); text(619, 435, 'D1 Didi index 1.0118 1.0000 0.9839');

// Oscillator 2
line(167, 541.5, 1069, 541.5, DG);
text(166, 547, 'OB');
hist(21, '483w 480w 453w 435w 420k 432w 447w 456w 456w 459w 465w 450w 471w - - 483w 537w 537w 537w 510w 477w 492w 459w 459w 468w 456w 465w 465w 495w 494w 495w - 585w 549w 564w 567w 611k 591w 537w 507w 477w 510w 510w 489w 480w 510w 534w 537w 570w 524w 534w 567w 657k 648k 630k 684k 672k 627k 642k 603w 618k 621k 654k 606w 618k 657k 612k 633k 606w 606k 594w 588w 579w 552w 552w 546w 552w 546w 552w 564w 555w 558w 537w 537w 534w 528w 534w 525w 528w 525w 522w 524w 531w 524w - 513w 501w 495w 474w 489w 501w 501w 495w 501w 483w 465w 456w 474w 471w 474w 477w 456w 465w', 572);
line(167, 564.5, 1069, 564.5, SLATE); line(167, 579.5, 1069, 579.5, SLATE); line(167, 602.5, 1069, 602.5, DR);
line(4, 572.5, 1324, 572.5, '#000');
poly(0, 400, '500,420 570,420 592,433 612,450 640,683 663,427 690,420 1080,420 1130,428 1165,428 1190,420 2872,420 2890,428 2910,428 2922,420 3234,420', '#f00', 2);

// Trend squares
text(166, 646, '000   D1 trend direction & force histo (3) 1.0000');
const inAny = (k, r) => r.some(([a, b]) => k >= a && k <= b);
for (let k = 21; k <= 134; k++) {
  rect(bx(k) - 1, 635, 3, 3, inAny(k, [[35, 42], [53, 60], [73, 107]]) ? '#f00' : '#00f');
  rect(bx(k) - 1, 641, 3, 4, inAny(k, [[34, 40], [49, 59], [69, 93], [100, 103], [122, 125]]) ? '#f00' : '#00f');
}
text(9, 661, 'hprp 0.0000  hprp 0.0000');
path('M5 655.500H206l7-5 8 5H957l8-4 8 4H1080', '#000', 5);
path('M5 655.500H206l7-5 8 5H957l3-1 10 0 3 1H1078', '#fff', 1);

// Value scales
text(1328, 433, '1.5711'); text(1328, 529, '1.5638'); text(1328, 545, '1.5737'); text(1328, 629, '1.5103');
line(1328, 530, 1364, 530, SLATE, 2, '2 1'); line(1328, 630, 1364, 630, SLATE, 2, '2 1');
rect(1325, 446, 7, 11, '#000'); text(1326, 455, '0', 'inv'); rect(1325, 567, 7, 11, '#000'); text(1326, 576, '0', 'inv');
text(1327, 642, '0.00'); text(1327, 644, '12.5'); text(1327, 659, '0.00'); text(1328, 659, '100');

// Dates
['11 Nov 2019', '21 Nov 2019', '3 Dec 2019', '13 Dec 2019', '26 Dec 2019', '8 Jan 2020', '20 Jan 2020', '30 Jan 2020', '11 Feb 2020', '21 Feb 2020', '4 Mar 2020', '16 Mar 2020', '26 Mar 2020', '7 Apr 2020', '20 Apr 2020', '30 Apr 2020', '12 May 2020'].forEach((s, i) => {
  line(5.5 + 64 * i, 663, 5.5 + 64 * i, 666, SLATE); text(4 + 64 * i, 675, s);
});

// Connection meter
const sig = document.getElementById('signal');
for (let i = 0; i < 8; i++) {
  el('rect', { x: i * 3, y: 1, width: 2, height: 10 - i, fill: '#5f7f0a' }, undefined, sig);
  el('rect', { x: i * 3, y: 11 - i, width: 2, height: 3 + i, fill: '#0b4a6f' }, undefined, sig);
}
```
